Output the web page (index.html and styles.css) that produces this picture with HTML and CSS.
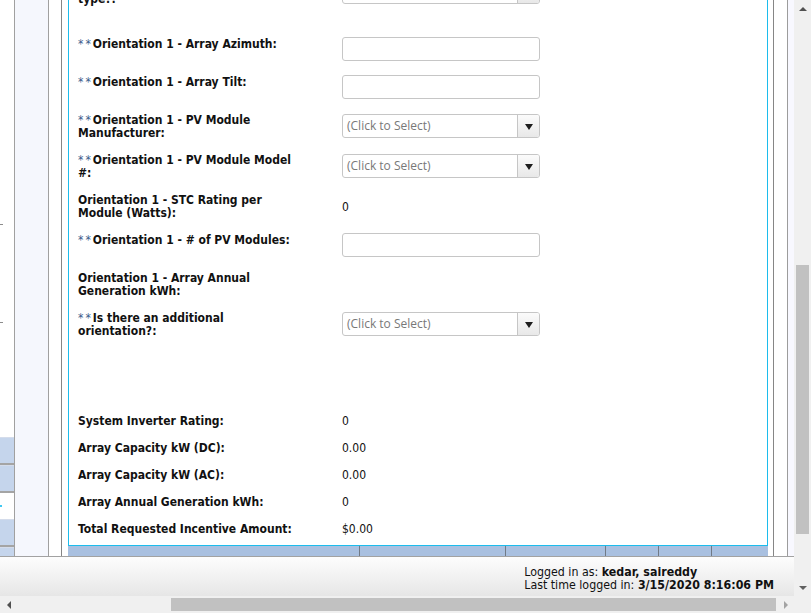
FILE: index.html
```html
<!DOCTYPE html>
<html>
<head>
<meta charset="utf-8">
<title>Application</title>
<link rel="stylesheet" href="styles.css">
</head>
<body>
<div class="window">
  <div class="viewport">
    <div class="main">
      <div class="nav">
        <div class="nav-top"><span class="tick t1"></span><span class="tick t2"></span></div>
        <div class="tab"></div>
        <div class="tab"></div>
        <div class="nav-gap"><span class="dot"></span></div>
        <div class="tab"></div>
        <div class="tab"></div>
      </div>
      <div class="panel"></div>
      <div class="splitter"></div>
      <div class="center">
        <div class="content">
          <div class="form">
            <div class="row first">
              <div class="lbl"><span class="req">**</span>Orientation 1 - Inverter<br>type?:</div>
              <div class="val"><div class="sel"><span class="sel-text">(Click to Select)</span><span class="sel-btn"></span></div></div>
            </div>
            <div class="row">
              <div class="lbl"><span class="req">**</span>Orientation 1 - Array Azimuth:</div>
              <div class="val"><div class="txt"></div></div>
            </div>
            <div class="row">
              <div class="lbl"><span class="req">**</span>Orientation 1 - Array Tilt:</div>
              <div class="val"><div class="txt"></div></div>
            </div>
            <div class="row">
              <div class="lbl"><span class="req">**</span>Orientation 1 - PV Module<br>Manufacturer:</div>
              <div class="val"><div class="sel"><span class="sel-text">(Click to Select)</span><span class="sel-btn"></span></div></div>
            </div>
            <div class="row">
              <div class="lbl"><span class="req">**</span>Orientation 1 - PV Module Model<br>#:</div>
              <div class="val"><div class="sel"><span class="sel-text">(Click to Select)</span><span class="sel-btn"></span></div></div>
            </div>
            <div class="row">
              <div class="lbl">Orientation 1 - STC Rating per<br>Module (Watts):</div>
              <div class="val num">0</div>
            </div>
            <div class="row">
              <div class="lbl"><span class="req">**</span>Orientation 1 - # of PV Modules:</div>
              <div class="val"><div class="txt"></div></div>
            </div>
            <div class="row">
              <div class="lbl">Orientation 1 - Array Annual<br>Generation kWh:</div>
              <div class="val num"></div>
            </div>
            <div class="row">
              <div class="lbl"><span class="req">**</span>Is there an additional<br>orientation?:</div>
              <div class="val"><div class="sel"><span class="sel-text">(Click to Select)</span><span class="sel-btn"></span></div></div>
            </div>
            <div class="spacer"></div>
            <div class="row">
              <div class="lbl">System Inverter Rating:</div>
              <div class="val num">0</div>
            </div>
            <div class="row">
              <div class="lbl">Array Capacity kW (DC):</div>
              <div class="val num">0.00</div>
            </div>
            <div class="row">
              <div class="lbl">Array Capacity kW (AC):</div>
              <div class="val num">0.00</div>
            </div>
            <div class="row">
              <div class="lbl">Array Annual Generation kWh:</div>
              <div class="val num">0</div>
            </div>
            <div class="row">
              <div class="lbl">Total Requested Incentive Amount:</div>
              <div class="val num">$0.00</div>
            </div>
          </div>
        </div>
        <div class="strip">
          <span class="cell c1"></span><span class="cell c2"></span><span class="cell c3"></span><span class="cell c4"></span><span class="cell c5"></span><span class="cell c6"></span>
        </div>
      </div>
      <div class="rightcol"><div class="rc-a"></div><div class="rc-b"></div><div class="rc-c"></div></div>
    </div>
    <div class="footer">
      <div class="login">
        <div>Logged in as: <b>kedar, saireddy</b></div>
        <div>Last time logged in: <b>3/15/2020 8:16:06 PM</b></div>
      </div>
    </div>
  </div>
  <div class="vscroll">
    <div class="sbtn"><span class="arr up"></span></div>
    <div class="vtrack"><div class="vthumb"></div></div>
    <div class="sbtn"><span class="arr down"></span></div>
  </div>
  <div class="hscroll">
    <div class="sbtn"><span class="arr left"></span></div>
    <div class="htrack"><div class="hthumb"></div></div>
    <div class="sbtn"><span class="arr right"></span></div>
  </div>
  <div class="corner"></div>
</div>
</body>
</html>
```

FILE: styles.css
```css
html, body {
  margin: 0;
  padding: 0;
}
body {
  width: 811px;
  height: 613px;
  overflow: hidden;
  background: #fff;
  font-family: "DejaVu Sans Condensed", "DejaVu Sans", sans-serif;
  color: #111;
}
.window {
  display: grid;
  grid-template-columns: 794px 17px;
  grid-template-rows: 596px 17px;
  width: 811px;
  height: 613px;
}
.viewport {
  display: flex;
  flex-direction: column;
  overflow: hidden;
}
.main {
  height: 556px;
  display: flex;
  flex: none;
}

/* left navigation */
.nav {
  width: 14px;
  border-right: 1px solid #a0a0a0;
  display: flex;
  flex-direction: column;
  background: #fff;
  overflow: hidden;
}
.nav-top {
  height: 437px;
  flex: none;
  display: flex;
  flex-direction: column;
}
.tick {
  display: block;
  width: 3px;
  height: 1px;
  background: #8c8c8c;
}
.t1 { margin-top: 224px; }
.t2 { margin-top: 97px; }
.tab {
  flex: none;
  height: 25px;
  background: #c5d5ec;
  border-top: 1px solid #d4dceb;
  border-bottom: 2px solid #a4a4a4;
  box-sizing: content-box;
}
.nav-gap {
  flex: none;
  height: 26px;
  display: flex;
  align-items: center;
}
.dot {
  display: block;
  width: 2px;
  height: 2px;
  background: #3fc8f2;
}
.panel {
  width: 33px;
  background: #f5f7fd;
  border-right: 1px solid #a0a0a0;
}
.splitter {
  width: 12px;
  background: #fff;
  border-right: 1px solid #858585;
}

/* center */
.center {
  width: 700px;
  padding-left: 6px;
  display: flex;
  flex-direction: column;
}
.content {
  flex: 1;
  background: #fff;
  border: 1px solid #1cbcec;
  border-top: none;
  overflow: hidden;
}
.form {
  padding-left: 9px;
}
.row {
  display: grid;
  grid-template-columns: 264px 198px;
  padding: 7px 0;
}
.row.first {
  margin-top: -28px;
  margin-bottom: 18px;
}
.lbl {
  align-self: start;
  font-size: 12px;
  line-height: 13px;
  padding-top: 1px;
  margin-bottom: -1px;
  font-weight: bold;
  color: #111;
  white-space: nowrap;
}
.req {
  font-weight: normal;
  letter-spacing: 2px;
  color: #3b5a8a;
}
.val {
  align-self: center;
}
.num {
  font-size: 12px;
  line-height: 13px;
  padding-top: 1px;
  margin-bottom: -1px;
  color: #111;
}
.spacer {
  height: 63px;
}
.txt {
  height: 24px;
  box-sizing: border-box;
  border: 1px solid #c6c6c6;
  border-radius: 3px;
  background: #fff;
}
.sel {
  display: flex;
  height: 24px;
  box-sizing: border-box;
  border: 1px solid #c6c6c6;
  border-radius: 3px;
  background: #fff;
  overflow: hidden;
}
.sel-text {
  flex: 1;
  padding-left: 4px;
  font-family: "Open Sans", "Noto Sans", sans-serif;
  font-size: 12px;
  line-height: 22px;
  color: #787878;
  white-space: nowrap;
}
.sel-btn {
  width: 21px;
  border-left: 1px solid #c6c6c6;
  background: linear-gradient(#fbfbfb, #e8e8e8);
  display: flex;
  align-items: center;
  justify-content: center;
}
.sel-btn::after {
  content: "";
  width: 0;
  height: 0;
  border-left: 4px solid transparent;
  border-right: 4px solid transparent;
  border-top: 6px solid #1e1e1e;
  margin-top: 1px;
}

/* blue strip under content */
.strip {
  height: 10px;
  flex: none;
  display: flex;
  background: #a9c0e0;
}
.cell {
  display: block;
  height: 100%;
  border-left: 1px solid #707a86;
  box-sizing: border-box;
}
.c1 { width: 291px; border-left: none; }
.c2 { width: 146px; }
.c3 { width: 100px; }
.c4 { width: 53px; }
.c5 { width: 53px; }
.c6 { flex: 1; }

/* right edge */
.rightcol {
  width: 26px;
  display: flex;
}
.rc-a {
  width: 5px;
  background: #fff;
  border-right: 1px solid #868686;
}
.rc-b {
  width: 13px;
  background: #fff;
  border-right: 1px solid #9c9c9c;
}
.rc-c {
  flex: 1;
  background: #f8f8ff;
}

/* footer */
.footer {
  flex: none;
  height: 39px;
  border-top: 1px solid #a2a2a2;
  background: linear-gradient(#fdfdfd, #e6e6e6);
  display: flex;
  justify-content: flex-end;
}
.login {
  margin-right: 20px;
  padding-top: 9px;
  font-size: 12.3px;
  line-height: 13px;
  color: #111;
  white-space: nowrap;
}
.login b {
  font-weight: bold;
}

/* scrollbars */
.vscroll {
  background: #f0f0f0;
  display: flex;
  flex-direction: column;
}
.hscroll {
  background: #f0f0f0;
  display: flex;
}
.corner {
  background: #f0f0f0;
}
.sbtn {
  width: 17px;
  height: 17px;
  flex: none;
  display: flex;
  align-items: center;
  justify-content: center;
}
.vtrack {
  flex: 1;
  padding-top: 248px;
}
.vthumb {
  height: 269px;
  margin: 0 2px;
  background: #c1c1c1;
}
.htrack {
  flex: 1;
  padding-left: 154px;
  display: flex;
  align-items: center;
}
.hthumb {
  width: 605px;
  height: 13px;
  background: #c1c1c1;
}
.arr {
  display: block;
  width: 0;
  height: 0;
}
.arr.up {
  border-left: 4px solid transparent;
  border-right: 4px solid transparent;
  border-bottom: 4px solid #505050;
}
.arr.down {
  border-left: 4px solid transparent;
  border-right: 4px solid transparent;
  border-top: 4px solid #606060;
}
.arr.left {
  border-top: 4px solid transparent;
  border-bottom: 4px solid transparent;
  border-right: 4px solid #505050;
}
.arr.right {
  border-top: 4px solid transparent;
  border-bottom: 4px solid transparent;
  border-left: 4px solid #a3a3a3;
}
```
